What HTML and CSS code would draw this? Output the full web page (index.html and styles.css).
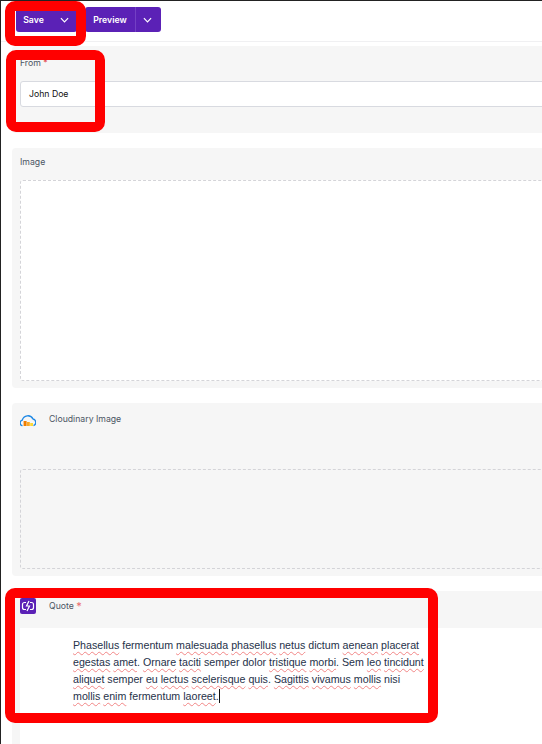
FILE: index.html
```html
<!DOCTYPE html>
<html lang="en">
<head>
<meta charset="utf-8">
<title>Entry editor</title>
<link rel="stylesheet" href="styles.css">
</head>
<body>
<div class="app">
  <header class="toolbar">
    <div class="btn-group save">
      <button class="btn-main">Save</button>
      <button class="btn-drop" aria-label="More"><svg class="chev" viewBox="0 0 10 6"><path d="M1 1l4 4 4-4"/></svg></button>
    </div>
    <div class="btn-group preview">
      <button class="btn-main">Preview</button>
      <button class="btn-drop" aria-label="More"><svg class="chev" viewBox="0 0 10 6"><path d="M1 1l4 4 4-4"/></svg></button>
    </div>
  </header>

  <section class="panel from">
    <div class="label">From <span class="req">*</span></div>
    <div class="input">John Doe</div>
  </section>

  <section class="panel image">
    <div class="label">Image</div>
    <div class="drop"></div>
  </section>

  <section class="panel cloud">
    <div class="label iconed">
      <svg class="ico" viewBox="0 0 16 14">
        <path d="M2.500 12.700A2.800 2.800 0 0 1 2.300 7.200 5.700 5.700 0 0 1 13 6a3.500 3.500 0 0 1 .5 6.700" fill="none" stroke="#1e88e5" stroke-width="1.300"/>
        <rect x="3.600" y="8" width="3" height="5" fill="#ef7d00"/>
        <rect x="7" y="9" width="2.800" height="4" fill="#f9a825"/>
        <rect x="10.200" y="10" width="2.800" height="3" fill="#fdd835"/>
      </svg>
      <span>Cloudinary Image</span>
    </div>
    <div class="drop"></div>
  </section>

  <section class="panel quote">
    <div class="label iconed">
      <span class="badge">
        <svg viewBox="0 0 16 16" fill="none" stroke="#fff" stroke-width="1.200">
          <path d="M6 4.500H4.500a2 2 0 0 0-2 2v3a2 2 0 0 0 2 2H6"/>
          <path d="M10 11.500h1.500a2 2 0 0 0 2-2v-3a2 2 0 0 0-2-2H10"/>
          <path d="M9 3 6.500 8h3L7 13"/>
        </svg>
      </span>
      <span>Quote <span class="req big">*</span></span>
    </div>
    <div class="editor">
      <p><span class="sp">Phasellus</span> fermentum <span class="sp">malesuada</span> <span class="sp">phasellus</span> <span class="sp">netus</span> dictum <span class="sp">aenean</span> <span class="sp">placerat</span> <span class="sp">egestas</span> <span class="sp">amet</span>. <span class="sp">Ornare</span> <span class="sp">taciti</span> semper dolor <span class="sp">tristique</span> <span class="sp">morbi</span>. Sem <span class="sp">leo</span> <span class="sp">tincidunt</span> <span class="sp">aliquet</span> semper <span class="sp">eu</span> <span class="sp">lectus</span> <span class="sp">scelerisque</span> <span class="sp">quis</span>. <span class="sp">Sagittis</span> <span class="sp">vivamus</span> <span class="sp">mollis</span> nisi <span class="sp">mollis</span> <span class="sp">enim</span> fermentum <span class="sp">laoreet</span>.<span class="caret"></span></p>
    </div>
  </section>
</div>

<div class="mark mark-save"></div>
<div class="mark mark-from"></div>
<div class="mark mark-quote"></div>
</body>
</html>
```
FILE: styles.css
```css
* { box-sizing: border-box; }
html, body { margin: 0; height: 100%; overflow: hidden; background: #fff; }
body { position: relative; font-family: Inter, "Liberation Sans", sans-serif; }

.app {
  width: 760px;
  height: 744px;
  overflow: hidden;
  border-left: 1px solid #222;
  border-top: 1px solid #222;
}

.toolbar {
  height: 41px;
  display: flex;
  align-items: flex-start;
  gap: 8px;
  padding: 6px 0 0 15px;
  border-bottom: 1px solid #f0f0f2;
}

.btn-group {
  display: flex;
  height: 25px;
  background: #5b21b6;
  border-radius: 3px;
}
.btn-main, .btn-drop {
  border: 0;
  background: transparent;
  color: #fff;
  font: 600 8.700px Inter, sans-serif;
  padding: 0;
  display: flex;
  align-items: center;
  justify-content: center;
}
.save .btn-main { width: 37px; padding-right: 2px; }
.save .btn-drop { width: 24px; padding-right: 2px; }
.preview .btn-main { width: 50px; }
.preview .btn-drop { width: 26px; border-left: 1px solid #7340c4; padding-right: 2px; }
.chev { width: 9px; height: 6px; fill: none; stroke: #fff; stroke-width: 1.300; }

.panel {
  margin: 0 0 15px 11px;
  padding: 0 0 0 8px;
  background: #f6f6f6;
  border-radius: 4px 0 0 4px;
}
.from { height: 87px; margin-top: 4px; padding-top: 11px; }
.image { height: 240px; padding-top: 8px; }
.cloud { height: 173px; padding-top: 10px; }
.quote { height: 160px; margin-bottom: 0; padding-top: 7px; }

.label {
  font-size: 8.700px;
  line-height: 12px;
  color: #4b5563;
}
.req { color: #e5484d; }
.req.big { font-size: 11px; line-height: 10px; position: relative; top: 1px; color: #ea6a6e; }
.iconed { display: flex; align-items: flex-start; gap: 13px; }

.input {
  margin-top: 12px;
  height: 26px;
  padding-left: 8px;
  background: #fff;
  border: 1px solid #d8dae0;
  border-radius: 3px;
  font-size: 8.700px;
  line-height: 24px;
  color: #111;
}

.drop {
  background: #f6f6f6;
  border: 1px dashed #d4d4d8;
  border-radius: 3px;
}
.image .drop { margin-top: 12px; height: 201px; background: #fff; }
.cloud .drop { margin-top: 42px; height: 100px; }

.ico { width: 16px; height: 14px; flex: none; margin-top: 0; }
.badge {
  width: 16px;
  height: 16px;
  flex: none;
  background: #5b21b6;
  border-radius: 2px;
  display: block;
}
.badge svg { display: block; width: 16px; height: 16px; }

.quote .label { height: 30px; line-height: 16px; }
.editor {
  background: #fff;
  height: 120px;
  padding: 9px 0 0 53px;
}
.editor p {
  margin: 0;
  width: 355px;
  font: 10.670px/17px "Liberation Sans", Arial, sans-serif;
  color: #26324a;
}
.sp {
  text-decoration: underline wavy #f28686 1px;
  text-underline-offset: 2px;
}
.caret {
  display: inline-block;
  width: 1px;
  height: 14px;
  background: #111;
  vertical-align: -3px;
}

.mark {
  position: absolute;
  border: 10px solid #f00;
  border-radius: 10px;
  pointer-events: none;
}
.mark-save { left: 5px; top: 1px; width: 81px; height: 45px; }
.mark-from { left: 6px; top: 50px; width: 99px; height: 82px; }
.mark-quote { left: 5px; top: 588px; width: 433px; height: 135px; }
```
